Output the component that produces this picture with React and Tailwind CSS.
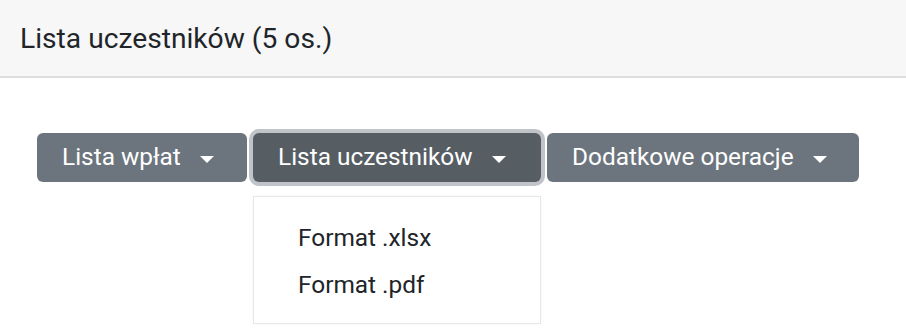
import React from "react";

function Caret() {
  return (
    <span className="ml-[19px] inline-block w-0 h-0 border-t-[7px] border-t-white border-x-[7px] border-x-transparent translate-y-[2px]" />
  );
}

function Btn({ label, active, width }) {
  return (
    <button
      type="button"
      className={
        "flex items-center h-[49px] pl-[25px] rounded-[6px] text-white text-[24.4px] leading-none " +
        width +
        " " +
        (active
          ? "bg-[#565e64] shadow-[0_0_0_4px_rgba(130,138,145,0.5)]"
          : "bg-[#6c757d]")
      }
    >
      <span>{label}</span>
      <Caret />
    </button>
  );
}

export default function App() {
  return (
    <div className="w-[906px] h-[328px] bg-white overflow-hidden" style={{ fontFamily: "Roboto, 'Liberation Sans', sans-serif" }}>
      <div className="bg-[#f7f7f7] border-b-2 border-[#dddddd] h-[78px] px-[20px] pt-[18px] text-[28.2px] leading-[42px] text-[#212529]">
        Lista uczestników (5 os.)
      </div>
      <div className="pl-[37px] pt-[55px] flex items-start gap-[6px]">
        <Btn label="Lista wpłat" width="w-[210px]" />
        <div className="relative">
          <Btn label="Lista uczestników" active width="w-[288px]" />
          <div className="absolute left-0 top-[63px] w-[288px] bg-white border border-[#e6e6ec] shadow-[0_0_4px_rgba(0,0,0,0.04)] pt-[17px] pb-[15px]">
            <div className="h-[47px] leading-[47px] pl-[44px] text-[24.4px] text-[#212529]">Format .xlsx</div>
            <div className="h-[47px] leading-[47px] pl-[44px] text-[24.4px] text-[#212529]">Format .pdf</div>
          </div>
        </div>
        <Btn label="Dodatkowe operacje" width="w-[312px]" />
      </div>
    </div>
  );
}
